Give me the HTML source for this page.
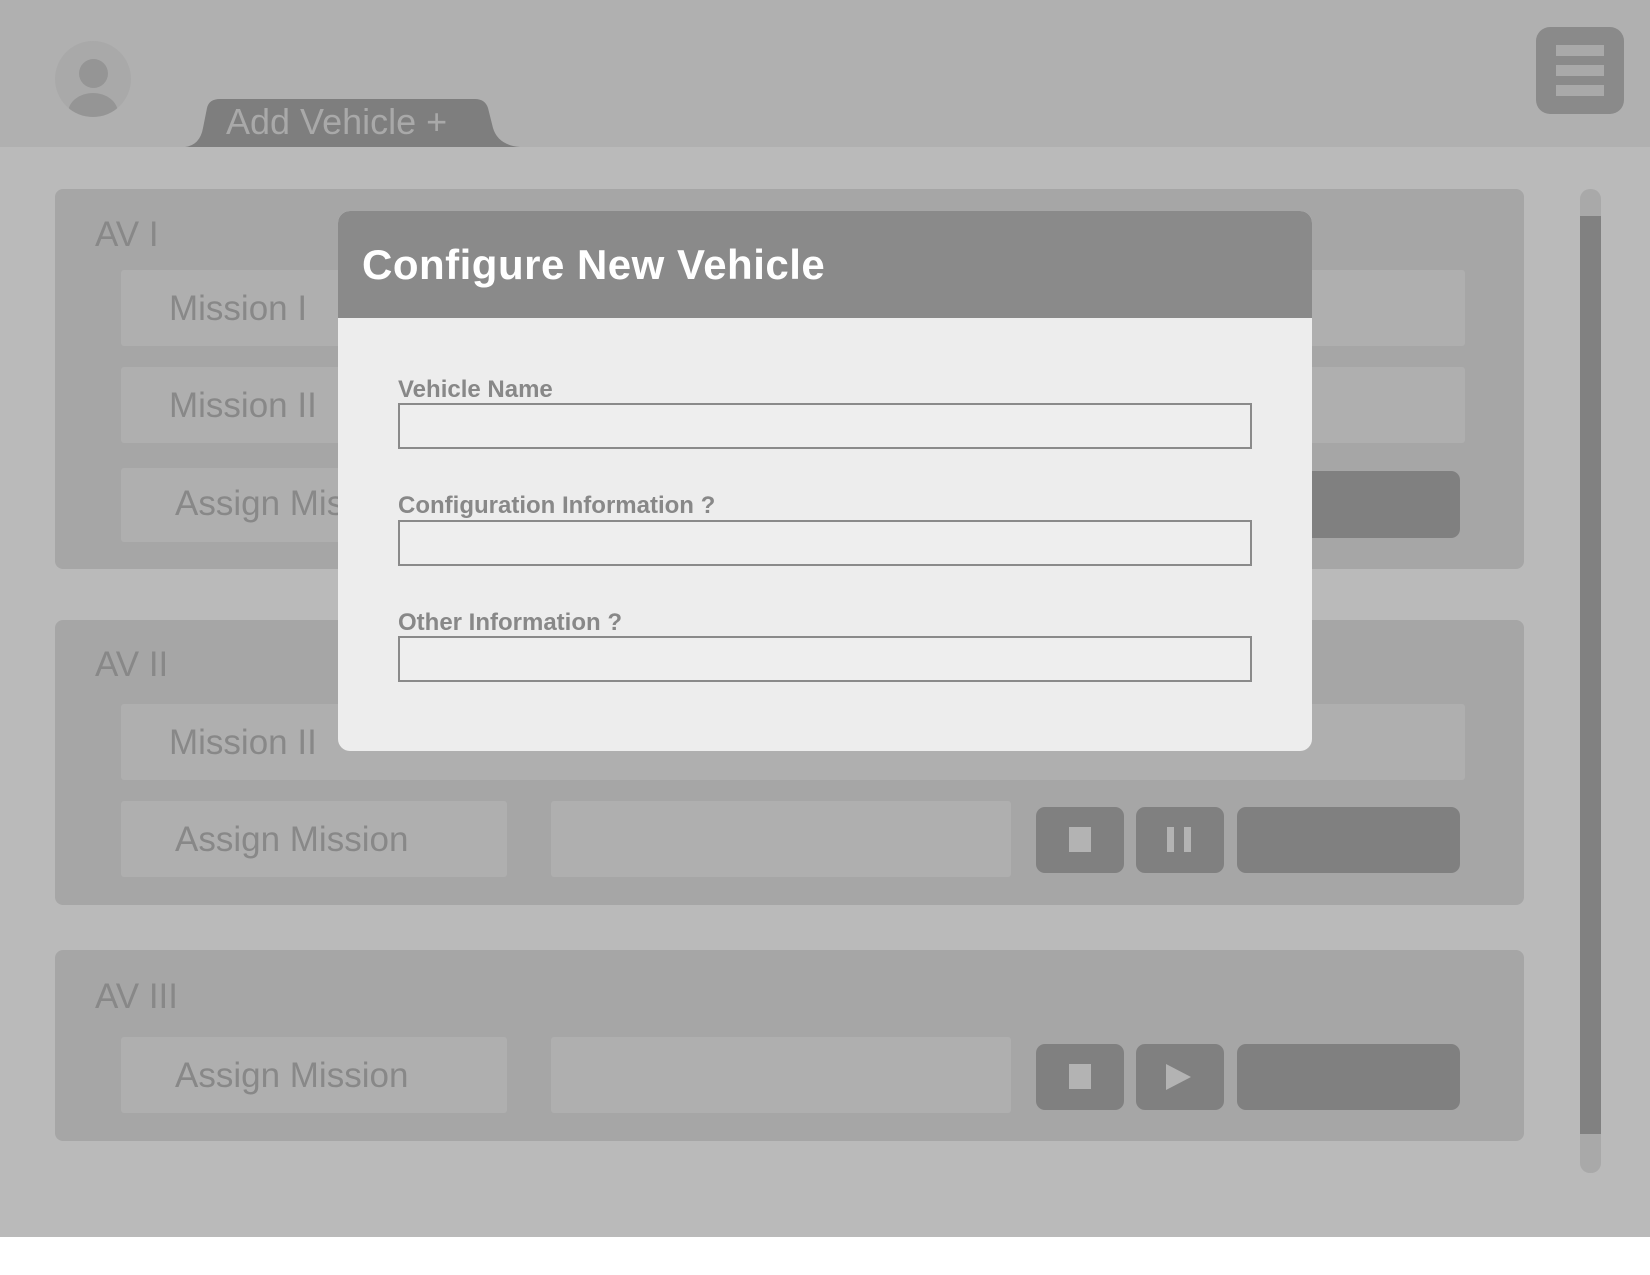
<!DOCTYPE html>
<html><head><style>
*{margin:0;padding:0;box-sizing:border-box}
body{width:1650px;height:1275px;background:#fff;position:relative;overflow:hidden;font-family:"Liberation Sans",sans-serif}
.a{position:absolute}
.card{background:#a6a6a6;border-radius:8px;left:55px;width:1469px}
.row{background:#afafaf;border-radius:3px}
.t{color:#888;font-size:35px}
.btn{background:#808080;border-radius:9px}
.lbl{color:#888;font-size:24px;font-weight:bold;left:398px}
.inp{left:398px;width:854px;height:46px;border:2px solid #8a8a8a;background:#eeeeee}
</style></head><body>
<div class="a" style="left:0;top:0;width:1650px;height:147px;background:#b0b0b0"></div>
<div class="a" style="left:0;top:147px;width:1650px;height:1090px;background:#bababa"></div>
<div class="a" style="left:55px;top:41px;width:76px;height:76px;border-radius:50%;background:#a9a9a9;overflow:hidden">
 <div class="a" style="left:24px;top:18px;width:29px;height:29px;border-radius:50%;background:#959595"></div>
 <div class="a" style="left:13px;top:52px;width:50px;height:40px;border-radius:50%;background:#959595"></div>
</div>
<svg class="a" style="left:180px;top:98px" width="345" height="50"><path d="M5 49 Q20 47 23 30 L27 10 Q29 1 40 1 L295 1 Q305 1 308 10 L313 30 Q318 47 340 49 Z" fill="#7e7e7e"/></svg>
<div class="a" style="left:226px;top:101px;color:#a9a9a9;font-size:36px">Add Vehicle +</div>
<div class="a" style="left:1536px;top:27px;width:88px;height:87px;background:#8a8a8a;border-radius:14px">
 <div class="a" style="left:20px;top:18px;width:48px;height:11px;background:#a9a9a9"></div>
 <div class="a" style="left:20px;top:38px;width:48px;height:11px;background:#a9a9a9"></div>
 <div class="a" style="left:20px;top:58px;width:48px;height:11px;background:#a9a9a9"></div>
</div>
<div class="a" style="left:1580px;top:189px;width:21px;height:984px;background:#a9a9a9;border-radius:10px"></div>
<div class="a" style="left:1580px;top:216px;width:21px;height:918px;background:#818181"></div>

<div class="a card" style="top:189px;height:380px"></div>
<div class="a t" style="left:95px;top:215px">AV I</div>
<div class="a row" style="left:121px;top:270px;width:1344px;height:76px"></div>
<div class="a t" style="left:169px;top:289px">Mission I</div>
<div class="a row" style="left:121px;top:367px;width:1344px;height:76px"></div>
<div class="a t" style="left:169px;top:386px">Mission II</div>
<div class="a row" style="left:121px;top:468px;width:386px;height:74px"></div>
<div class="a t" style="left:175px;top:484px">Assign Mission</div>
<div class="a btn" style="left:1237px;top:471px;width:223px;height:67px"></div>

<div class="a card" style="top:620px;height:285px"></div>
<div class="a t" style="left:95px;top:645px">AV II</div>
<div class="a row" style="left:121px;top:704px;width:1344px;height:76px"></div>
<div class="a t" style="left:169px;top:723px">Mission II</div>
<div class="a row" style="left:121px;top:801px;width:386px;height:76px"></div>
<div class="a t" style="left:175px;top:820px">Assign Mission</div>
<div class="a row" style="left:551px;top:801px;width:460px;height:76px"></div>
<div class="a btn" style="left:1036px;top:807px;width:88px;height:66px"><div class="a" style="left:33px;top:20px;width:22px;height:25px;background:#b3b3b3"></div></div>
<div class="a btn" style="left:1136px;top:807px;width:88px;height:66px"><div class="a" style="left:31px;top:20px;width:7px;height:25px;background:#b3b3b3"></div><div class="a" style="left:48px;top:20px;width:7px;height:25px;background:#b3b3b3"></div></div>
<div class="a btn" style="left:1237px;top:807px;width:223px;height:66px"></div>

<div class="a card" style="top:950px;height:191px"></div>
<div class="a t" style="left:95px;top:977px">AV III</div>
<div class="a row" style="left:121px;top:1037px;width:386px;height:76px"></div>
<div class="a t" style="left:175px;top:1056px">Assign Mission</div>
<div class="a row" style="left:551px;top:1037px;width:460px;height:76px"></div>
<div class="a btn" style="left:1036px;top:1044px;width:88px;height:66px"><div class="a" style="left:33px;top:20px;width:22px;height:25px;background:#b3b3b3"></div></div>
<div class="a btn" style="left:1136px;top:1044px;width:88px;height:66px"><svg class="a" style="left:30px;top:20px" width="30" height="26"><path d="M0 0 L25 13 L0 26Z" fill="#b3b3b3"/></svg></div>
<div class="a btn" style="left:1237px;top:1044px;width:223px;height:66px"></div>

<div class="a" style="left:338px;top:211px;width:974px;height:540px;background:#ededed;border-radius:12px;overflow:hidden">
 <div class="a" style="left:0;top:0;width:974px;height:107px;background:#8a8a8a"></div>
 <div class="a" style="left:24px;top:30px;color:#fff;font-size:42px;font-weight:bold;letter-spacing:0.5px">Configure New Vehicle</div>
</div>
<div class="a lbl" style="top:376px">Vehicle Name</div>
<div class="a inp" style="top:403px"></div>
<div class="a lbl" style="top:492px">Configuration Information ?</div>
<div class="a inp" style="top:520px"></div>
<div class="a lbl" style="top:609px">Other Information ?</div>
<div class="a inp" style="top:636px"></div>
</body></html>
